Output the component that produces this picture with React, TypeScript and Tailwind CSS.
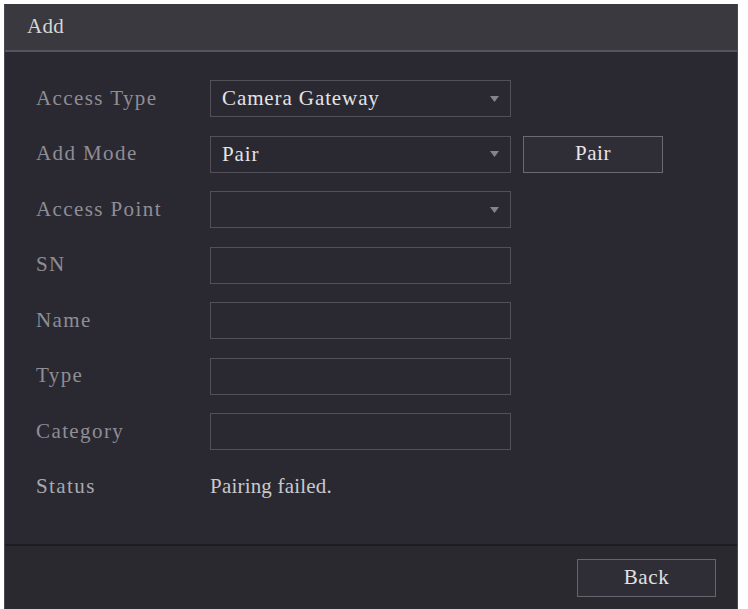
import { ReactNode } from 'react';

const SERIF = { fontFamily: '"Liberation Serif", "Times New Roman", serif' };

type Row = {
  label: string;
  kind: 'select' | 'input' | 'text';
  value?: string;
  extra?: ReactNode;
};

function Caret() {
  return (
    <svg width="9" height="6" viewBox="0 0 9 6" className="shrink-0" aria-hidden>
      <path d="M0 0 L9 0 L4.5 6 Z" fill="#85848c" />
    </svg>
  );
}

function Field({ kind, value }: { kind: Row['kind']; value?: string }) {
  if (kind === 'text') {
    return <span className="text-[21px] tracking-[0.2px] text-[#c9c9cc]">{value}</span>;
  }
  return (
    <div className="flex h-[37px] w-[301px] items-center justify-between border border-[#52515a] bg-[#2a2932] pl-[11px] pr-[11px]">
      <span className="text-[21px] leading-none tracking-[0.9px] text-[#e4e4e6]">{value}</span>
      {kind === 'select' ? <Caret /> : null}
    </div>
  );
}

const ROWS: Row[] = [
  { label: 'Access Type', kind: 'select', value: 'Camera Gateway' },
  {
    label: 'Add Mode',
    kind: 'select',
    value: 'Pair',
    extra: (
      <button
        type="button"
        className="ml-[12px] flex h-[37px] w-[140px] items-center justify-center border border-[#6b6a72] bg-[#2f2e37] text-[21px] tracking-[0.6px] text-[#e6e6e8]"
      >
        Pair
      </button>
    ),
  },
  { label: 'Access Point', kind: 'select' },
  { label: 'SN', kind: 'input' },
  { label: 'Name', kind: 'input' },
  { label: 'Type', kind: 'input' },
  { label: 'Category', kind: 'input' },
  { label: 'Status', kind: 'text', value: 'Pairing failed.' },
];

export default function App() {
  return (
    <div className="h-[609px] w-[748px] bg-white pl-[4px] pr-[10px] pt-[4px]" style={SERIF}>
      <div className="flex h-full flex-col border-l border-r border-[#4a4951] bg-[#2a2931]">
        <div className="flex h-[48px] items-center border-b-2 border-[#55545b] bg-[#3a3940] pl-[22px]">
          <span className="text-[21px] tracking-[0.3px] text-[#d6d6d8]">Add</span>
        </div>

        <div className="flex flex-1 flex-col gap-[18.5px] pt-[28px]">
          {ROWS.map((row) => (
            <div key={row.label} className="flex h-[37px] items-center">
              <span
                className={`w-[205px] shrink-0 pl-[31px] text-[21px] tracking-[1.4px] ${
                  row.kind === 'text' ? 'text-[#a9a9ad]' : 'text-[#8f8e95]'
                }`}
              >
                {row.label}
              </span>
              <Field kind={row.kind} value={row.value} />
              {row.extra}
            </div>
          ))}
        </div>

        <div className="flex h-[65px] items-center justify-end border-t-2 border-[#1d1c22] bg-[#2a2930] pr-[21px]">
          <button
            type="button"
            className="flex h-[38px] w-[139px] items-center justify-center border border-[#66656d] bg-[#2f2e37] text-[21px] tracking-[0.6px] text-[#e2e2e4]"
          >
            Back
          </button>
        </div>
      </div>
    </div>
  );
}
